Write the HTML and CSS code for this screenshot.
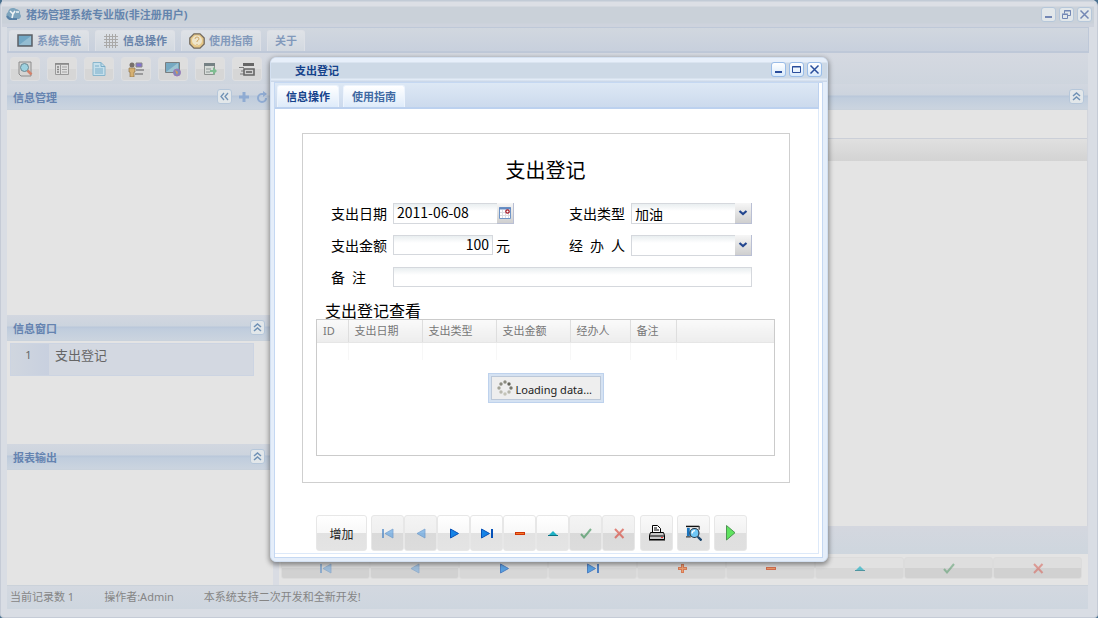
FILE: index.html
```html
<!DOCTYPE html>
<html lang="zh-CN">
<head>
<meta charset="utf-8">
<title>猪场管理系统专业版(非注册用户)</title>
<link rel="stylesheet" href="styles.css">
</head>
<body>
<svg class="sprite" aria-hidden="true">
  <symbol id="min" viewBox="0 0 13 13"><path d="M3 8h7v2H3z" fill="currentColor"/></symbol>
  <symbol id="max" viewBox="0 0 13 13"><path d="M2.500 3.500h8v6h-8zM2 4h9" fill="none" stroke="currentColor"/></symbol>
  <symbol id="restore" viewBox="0 0 13 13"><path d="M4.500 5.500v-3h6v5h-3M4 3h7M2.500 6.500h5v4h-5zM2 6h6" fill="none" stroke="currentColor"/></symbol>
  <symbol id="close" viewBox="0 0 13 13"><path d="M2.500 2.500l8 8M10.500 2.500l-8 8" fill="none" stroke="currentColor" stroke-width="1.500"/></symbol>
  <symbol id="up2" viewBox="0 0 13 13"><path d="M3 6l3.500-3L10 6M3 10l3.500-3 3.500 3" fill="none" stroke="currentColor" stroke-width="1.500"/></symbol>
  <symbol id="left2" viewBox="0 0 13 13"><path d="M6 3L3 6.500 6 10M10 3L7 6.500l3 3.500" fill="none" stroke="currentColor" stroke-width="1.300"/></symbol>
  <symbol id="first" viewBox="0 0 16 16"><path d="M3 4v9" stroke="#3f7fc4" stroke-width="2"/><path d="M13 4v9L5 8.500z" fill="#5fa4e4" stroke="#3f7fc4" stroke-width=".8"/></symbol>
  <symbol id="prev" viewBox="0 0 16 16"><path d="M12 4v9L4 8.500z" fill="#5fa4e4" stroke="#3f7fc4" stroke-width=".8"/></symbol>
  <symbol id="next" viewBox="0 0 16 16"><path d="M4.500 4v9l8-4.500z" fill="#1583e6" stroke="#0652b8"/></symbol>
  <symbol id="last" viewBox="0 0 16 16"><path d="M2.500 4v9l8-4.500z" fill="#1583e6" stroke="#0652b8"/><path d="M13 4v9" stroke="#0652b8" stroke-width="2"/></symbol>
  <symbol id="plus" viewBox="0 0 16 16"><path d="M7 4h3v3h3v3h-3v3H7v-3H4V7h3z" fill="#d84a10"/><path d="M5 8.500h7M8.500 5v7" stroke="#f58340"/></symbol>
  <symbol id="minus" viewBox="0 0 16 16"><path d="M3 7h10v3H3z" fill="#cf3507"/><path d="M4 8.500h8" stroke="#f47a2c"/></symbol>
  <symbol id="edit" viewBox="0 0 16 16"><path d="M3 11l5-5 5 5z" fill="#1fb2c6"/><path d="M3 10.500h10" stroke="#087284"/></symbol>
  <symbol id="check" viewBox="0 0 16 16"><path d="M3 9l3 3.500L13 4" fill="none" stroke="#3d9157" stroke-width="2"/></symbol>
  <symbol id="cancel" viewBox="0 0 16 16"><path d="M4 4l8.500 9M12.500 4L4 13" fill="none" stroke="#d9483b" stroke-width="2"/></symbol>
</svg>

<div class="app">
  <header class="app-title">
    <svg class="logo" viewBox="0 0 16 14"><path d="M3 12A4 4 0 0 1 2 5a5 5 0 0 1 8-3 4 4 0 0 1 4 5 3 3 0 0 1-1 5z" fill="#7da4bd"/><path d="M1 9a5 5 0 0 0 5 3h5" fill="none" stroke="#5680a6" stroke-width="2"/><path d="M4 4l3 3 2-3M7 7l-1 4M10 5h3" fill="none" stroke="#eef3f5" stroke-width="1.600"/></svg>
    <h1>猪场管理系统专业版(非注册用户)</h1>
    <div class="tools">
      <button class="tool" aria-label="最小化"><svg><use href="#min"/></svg></button>
      <button class="tool" aria-label="还原"><svg><use href="#restore"/></svg></button>
      <button class="tool" aria-label="关闭"><svg><use href="#close"/></svg></button>
    </div>
  </header>
  <nav class="app-tabs">
    <button class="tab"><svg viewBox="0 0 16 16"><path d="M1 2h14v11H1z" fill="#72a7c4" stroke="#5c6066" stroke-width="1.500"/><path d="M2 12L14 3v9z" fill="#94bdd2"/></svg>系统导航</button>
    <button class="tab active"><svg viewBox="0 0 16 16"><path d="M3.500 1v14M6.500 1v14M9.500 1v14M12.500 1v14M1 3.500h14M1 6.500h14M1 9.500h14M1 12.500h14" stroke="#aaa9a8" fill="none"/></svg>信息操作</button>
    <button class="tab"><svg viewBox="0 0 16 16"><path d="M5 .8h6L15.200 5v6L11 15.200H5L.8 11V5z" fill="#e6c787" stroke="#746b5f" stroke-width="1.300"/><circle cx="8" cy="7.500" r="5" fill="#eee5cb"/><path d="M6 6q0-2 2-2t2 2q0 1-2 2v1M8 11v1" fill="none" stroke="#cfa86b"/></svg>使用指南</button>
    <button class="tab">关于</button>
  </nav>
  <div class="app-toolbar">
    <button aria-label="查找"><svg viewBox="0 0 16 16"><path d="M2 1h12v14H4l-2-2z" fill="#d6d5d3" stroke="#8c8c8c"/><circle cx="7.500" cy="6.500" r="4" fill="#9dd1df" stroke="#6b8893"/><path d="M10.500 9.500l4 4" stroke="#d1826b" stroke-width="2.500"/></svg></button>
    <button aria-label="列表"><svg viewBox="0 0 16 16"><path d="M1.500 2.500h13v11h-13z" fill="#dedede" stroke="#999"/><path d="M1 3h14M3 6h2M3 8.500h2M3 11h2" stroke="#858585" stroke-width="1.500"/><path d="M6.500 3v10" stroke="#999"/><path d="M8 6h5M8 8.500h5M8 11h5" stroke="#a3a3a3"/></svg></button>
    <button aria-label="文档"><svg viewBox="0 0 16 16"><path d="M2 1.500h8l4 4v9H2z" fill="#c5dfeb" stroke="#88b6cd"/><path d="M10 1.500v4h4M4 5h4M4 8h8M4 10h8M4 12h8" fill="none" stroke="#79adc9"/></svg></button>
    <button aria-label="人员"><svg viewBox="0 0 16 16"><circle cx="4" cy="4" r="2.500" fill="#77706b"/><path d="M1 7h6v4H6v5H2v-5H1z" fill="#d6b071" stroke="#91754e" stroke-width=".7"/><path d="M8 2h6v4H8z" fill="#8173ce" stroke="#888"/><path d="M8 8h8v2H8zM7 12h8v2H7z" fill="#9a9a9b"/></svg></button>
    <button aria-label="网络"><svg viewBox="0 0 16 16"><path d="M.5 1.500h14v10H.5z" fill="#76a9c2" stroke="#7a7e80"/><path d="M1 11l12-9v9z" fill="#9fc4d2"/><circle cx="12" cy="11.500" r="3.500" fill="#7d8bbd" stroke="#9a78b8"/><path d="M10 9l3 2-1 3z" fill="#d89c55"/></svg></button>
    <button aria-label="数据"><svg viewBox="0 0 16 16"><path d="M2.500 2.500h10v11h-10z" fill="#d7dcd9" stroke="#8e9290"/><path d="M2 2h11v3H2z" fill="#758184"/><path d="M4 8h5M4 11h4" stroke="#8c9695"/><path d="M8 9h3V6l4 4-4 4v-3H8z" fill="#7fbd91"/></svg></button>
    <button aria-label="打印"><svg viewBox="0 0 16 16"><path d="M4 2h11v3H4z" fill="#666"/><path d="M0 6.500h5M2 10h3M1 13h4" stroke="#7b7b7b"/><path d="M5 8h10v6H5z" fill="#cfcfcf" stroke="#666" stroke-width="1.600"/><path d="M7 11h6" stroke="#777" stroke-width="2"/></svg></button>
  </div>
  <main class="workspace">
    <aside class="side">
      <section class="pane grow-205">
        <header class="pane-head"><h2>信息管理</h2>
          <button class="tool" aria-label="折叠"><svg><use href="#left2"/></svg></button>
          <button class="plain" aria-label="新增"><svg viewBox="0 0 12 12"><path d="M6 1v10M1 6h10" stroke="#8fabd2" stroke-width="3"/></svg></button>
          <button class="plain" aria-label="刷新"><svg viewBox="0 0 12 12"><path d="M8 3H6a4 4 0 1 0 4 4" fill="none" stroke="#8fabd2" stroke-width="2"/><path d="M7 0l4 3-4 3z" fill="#8fabd2"/></svg></button>
        </header>
      </section>
      <section class="pane grow-103">
        <header class="pane-head"><h2>信息窗口</h2><button class="tool" aria-label="折叠"><svg><use href="#up2"/></svg></button></header>
        <div class="row"><span class="row-no">1</span><span>支出登记</span></div>
      </section>
      <section class="pane grow-115">
        <header class="pane-head"><h2>报表输出</h2><button class="tool" aria-label="折叠"><svg><use href="#up2"/></svg></button></header>
      </section>
    </aside>
    <section class="main-pane">
      <header class="pane-head"><button class="tool" aria-label="折叠"><svg><use href="#up2"/></svg></button></header>
      <div class="main-grid"><div class="main-grid-head"></div></div>
      <div class="main-bar"></div>
      <div class="main-nav">
        <button class="off" aria-label="首条"><svg><use href="#first"/></svg></button>
        <button class="off" aria-label="上一条"><svg><use href="#prev"/></svg></button>
        <button aria-label="下一条"><svg><use href="#next"/></svg></button>
        <button aria-label="末条"><svg><use href="#last"/></svg></button>
        <button aria-label="增加"><svg><use href="#plus"/></svg></button>
        <button aria-label="删除"><svg><use href="#minus"/></svg></button>
        <button aria-label="编辑"><svg><use href="#edit"/></svg></button>
        <button class="off" aria-label="保存"><svg><use href="#check"/></svg></button>
        <button class="off" aria-label="取消"><svg><use href="#cancel"/></svg></button>
      </div>
    </section>
  </main>
  <footer class="status"><span>当前记录数 1</span><span>操作者:Admin</span><span>本系统支持二次开发和全新开发!</span></footer>
</div>

<div class="dialog" role="dialog" aria-labelledby="dialog-title">
  <header class="dialog-title">
    <h2 id="dialog-title">支出登记</h2>
    <div class="tools">
      <button class="tool" aria-label="最小化"><svg><use href="#min"/></svg></button>
      <button class="tool" aria-label="最大化"><svg><use href="#max"/></svg></button>
      <button class="tool" aria-label="关闭"><svg><use href="#close"/></svg></button>
    </div>
  </header>
  <div class="dialog-inner">
    <nav class="dialog-tabs"><button class="tab active">信息操作</button><button class="tab">使用指南</button></nav>
    <div class="dialog-body">
      <form class="sheet">
        <h3>支出登记</h3>
        <div class="fields">
          <label for="date">支出日期</label>
          <div class="control date">
            <input id="date" value="2011-06-08">
            <button type="button" class="trigger" aria-label="选择日期"><svg viewBox="0 0 14 14"><path d="M1.500 1.500h11v11h-11z" fill="#fff" stroke="#6f95c8"/><path d="M1 2.500h12" stroke="#6389c1" stroke-width="2"/><path d="M2 6.500h10M2 9.500h10M4.500 4v8M7.500 4v8M10.500 4v8" stroke="#dcdce2"/><circle cx="9.500" cy="5.500" r="1.700" fill="#fff" stroke="#a51220" stroke-width="1.200"/></svg></button>
          </div>
          <label for="kind">支出类型</label>
          <div class="control combo">
            <select id="kind"><option>加油</option></select>
            <svg class="trigger" viewBox="0 0 16 20"><path d="M4.500 8L8 11l3.500-3" fill="none" stroke="#23468f" stroke-width="2.200"/></svg>
          </div>
          <label for="sum">支出金额</label>
          <div class="amount"><input id="sum" value="100"><span>元</span></div>
          <label class="spread" for="who"><span>经</span><span>办</span><span>人</span></label>
          <div class="control combo">
            <select id="who"><option></option></select>
            <svg class="trigger" viewBox="0 0 16 20"><path d="M4.500 8L8 11l3.500-3" fill="none" stroke="#23468f" stroke-width="2.200"/></svg>
          </div>
          <label class="note" for="note"><span>备</span><span>注</span></label>
          <input class="wide" id="note">
        </div>
        <h4>支出登记查看</h4>
        <div class="grid">
          <table>
            <colgroup><col class="c-id"><col class="c-wide"><col class="c-wide"><col class="c-wide"><col class="c-who"><col class="c-note"><col></colgroup>
            <thead><tr><th>ID</th><th>支出日期</th><th>支出类型</th><th>支出金额</th><th>经办人</th><th>备注</th><th></th></tr></thead>
            <tbody><tr><td></td><td></td><td></td><td></td><td></td><td></td><td></td></tr></tbody>
          </table>
          <div class="loading" role="status"><div>
            <svg viewBox="0 0 16 16"><g fill="#8b8b80"><circle cx="8" cy="2" r="1.700"/><circle cx="12" cy="4" r="1.700" fill="#66665c"/><circle cx="14" cy="8" r="1.700" fill="#77776c"/><circle cx="12" cy="12" r="1.700" fill="#b5b5a9"/><circle cx="8" cy="14" r="1.700" fill="#c4c4b8"/><circle cx="4" cy="12" r="1.700" fill="#b9b9ae"/><circle cx="2" cy="8" r="1.700" fill="#a3a397"/><circle cx="4" cy="4" r="1.700"/></g></svg>
            <span>Loading data...</span></div></div>
        </div>
      </form>
      <div class="actions">
        <button class="add">增加</button>
        <div class="group">
          <button class="off" aria-label="首条"><svg><use href="#first"/></svg></button>
          <button class="off" aria-label="上一条"><svg><use href="#prev"/></svg></button>
          <button aria-label="下一条"><svg><use href="#next"/></svg></button>
          <button aria-label="末条"><svg><use href="#last"/></svg></button>
          <button aria-label="删除"><svg><use href="#minus"/></svg></button>
          <button aria-label="编辑"><svg><use href="#edit"/></svg></button>
          <button class="off" aria-label="保存"><svg><use href="#check"/></svg></button>
          <button class="off" aria-label="取消"><svg><use href="#cancel"/></svg></button>
        </div>
        <button class="soft" aria-label="打印"><svg viewBox="0 0 16 16"><path d="M3.500 7V.500h5l3 3V7" fill="#fff" stroke="#000"/><path d="M5 3h3M5 5h5" stroke="#000"/><path d="M1.500 7.500h13l1 3v4H.500v-4z" fill="#c9c9c9" stroke="#000"/><path d="M0 11h16M0 15h16" stroke="#000"/><path d="M12 12.500h2" stroke="#e33"/></svg></button>
        <button class="soft" aria-label="预览"><svg viewBox="0 0 17 17"><path d="M0 1.500h14" stroke="#111" stroke-width="1.500"/><path d="M1 3h3v9H1z" fill="#1b75bd"/><path d="M0 12.500h5M14 1v4" stroke="#444" stroke-width="1.300"/><circle cx="9" cy="8.500" r="4.800" fill="#6fc7f6" stroke="#234" stroke-width="1.200"/><path d="M6.500 9q0-3 3-3" fill="none" stroke="#fff" stroke-width="1.500"/><path d="M12.500 12.500l4 4" stroke="#16436b" stroke-width="2.500"/></svg></button>
        <button class="soft" aria-label="执行"><svg viewBox="0 0 16 16"><path d="M3.500.500v14.500L12 7.700z" fill="#5fe35f" stroke="#4d9652"/></svg></button>
      </div>
    </div>
  </div>
</div>
</body>
</html>
```
FILE: styles.css
```css
* { box-sizing: border-box; }
body, h1, h2, h3, h4 { margin: 0; }
body { position: relative; font: 11px/16px "Noto Sans", "Noto Sans CJK SC", sans-serif; overflow: hidden; background: #49708f; }
h1, h2 { font-size: 11px; line-height: 16px; font-weight: bold; }
button, input, select { font: inherit; color: inherit; margin: 0; padding: 0; border: 0; border-radius: 0; }
button { cursor: pointer; }
svg { display: block; width: 16px; height: 16px; }
.sprite { position: absolute; width: 0; height: 0; }

.tools { display: flex; gap: 3px; margin-left: auto; }
.tool { width: 15px; height: 15px; border: 1px solid #b6c7da; border-radius: 3px; background: #e2e7ea; color: #7387b4; display: grid; place-items: center; flex: none; }
.tool svg { width: 13px; height: 13px; }
.tab { display: flex; align-items: center; justify-content: center; gap: 4px; font-weight: bold; }

.app { display: flex; flex-direction: column; height: 100vh; padding: 0 8px 8px 6px; background: #d9dde4; border: solid #c5cbd6; border-width: 0 1px 1px; border-radius: 6px 6px 4px 4px; }
.app-title { display: flex; align-items: center; gap: 4px; height: 27px; flex: none; margin: 0 -5px 0 -5px; padding: 1px 2px 0 4px; background: linear-gradient(#c2cbd6 0 1px, #dcdfe5 2px 6px, #cad1d9 7px 23px, #ced3dd 24px); color: #6484ad; }
.app-title .logo { height: 14px; }
.app-title h1 { padding-top: 2px; }
.app-tabs { display: flex; gap: 6px; height: 26px; flex: none; padding: 2px 2px 0; background: linear-gradient(#d1d7df, #c8d0dd); border: solid #bec8d8; border-width: 1px 1px 2px 0; }
.app-tabs .tab { height: 21px; padding: 0 7px; background: linear-gradient(#dfe2e7, #d2d8e0); border: 1px solid #dde0e6; border-bottom: 0; border-radius: 3px 3px 0 0; color: #8299bb; }
.app-tabs .tab.active { color: #6783aa; }
.app-toolbar { display: flex; gap: 7px; height: 31px; flex: none; padding: 4px 3px; background: linear-gradient(#d5d9e1, #ced5de); margin-right: 1px; }
.app-toolbar button { display: grid; place-items: center; width: 30px; height: 24px; background: linear-gradient(#dedede 50%, #d6d6d6 50%); border: 1px solid #dedfe1; border-radius: 3px; }
.workspace { display: flex; flex: 1; min-height: 0; background: #d9dce3; gap: 6px; }
.side { display: flex; flex-direction: column; width: 266px; flex: none; background: #e4e4e4; }
.pane { display: flex; flex-direction: column; flex-basis: 26px; min-height: 0; }
.grow-205 { flex-grow: 205; }
.grow-103 { flex-grow: 103; }
.grow-115 { flex-grow: 115; }
.pane-head { display: flex; align-items: center; justify-content: flex-end; gap: 6px; height: 26px; flex: none; padding: 0 4px 0 6px; color: #6583b0; background: linear-gradient(#d2d7e0, #ccd4de 11px, #b9c7da 12px, #c0cddd 14px, #cbd4df); border-bottom: 1px solid #c9d2dc; }
.pane-head h2 { margin-right: auto; padding-top: 3px; }
.pane-head .tool { color: #6f91b5; }
.side .pane:first-child .pane-head { padding-right: 5px; }
.side .pane:not(:first-child) .pane-head { padding-right: 8px; }
.plain { background: none; width: 12px; height: 12px; }
.plain svg { width: 12px; height: 12px; }
.row { display: flex; height: 33px; margin: 2px 19px 0 3px; line-height: 22px; font-size: 13px; background: #d3d8e1; border: 1px solid #ccd4e2; color: #666; gap: 6px; }
.row-no { width: 38px; padding-right: 3px; text-align: center; font-size: 11px; background: linear-gradient(90deg, #d0d6df, #c8d0df); }
.main-pane { display: flex; flex-direction: column; flex: 1; min-width: 0; margin-right: 1px; background: #e4e4e4; }
.main-grid { flex: 1; padding-top: 28px; border-right: 1px solid #d2d5dc; }
.main-grid-head { height: 23px; background: linear-gradient(#e0e0e0, #d3d3d3); border-top: 1px solid #cbcfd8; }
.main-bar { height: 28px; background: linear-gradient(#d4d7df, #ced6de); }
.main-nav { display: flex; padding: 3px 6px 6px 2px; }
.main-nav button { flex: 1; height: 22px; display: grid; place-items: center; background: linear-gradient(#e1e1e1 50%, #d7d7d7 50%); border: 1px solid #dcdcdc; border-radius: 3px; }
.main-nav .off { background: linear-gradient(#dedede 50%, #d1d1d1 50%); }
.main-nav svg { opacity: .65; }
.main-nav .off svg { opacity: .45; }
.status { display: flex; gap: 30px; height: 24px; flex: none; align-items: center; margin-right: 1px; padding: 0 3px 2px; color: #858585; background: linear-gradient(#d3d8e0, #ced6df); border-top: 1px solid #cbd2da; }

.dialog { position: absolute; left: 270px; top: 57px; width: 558px; padding: 0 4px 3px 3px; background: #e5eefa; border: 1px solid #d3e0f1; border-radius: 6px; box-shadow: 0 2px 5px 1px rgba(0,0,0,.4); }
.dialog-title { display: flex; align-items: center; height: 24px; margin: 0 -4px 0 -3px; padding: 0 5px 1px 24px; background: linear-gradient(#e7effa 0 4px, #cdd9e6 5px 20px, #e2ebf6 21px 22px, #cbd8ea 23px); color: #15428b; border-radius: 5px 5px 0 0; }
.dialog-title h2 { padding-top: 3px; }
.dialog .tool { border-color: #99bce8; background: linear-gradient(#fff, #d9eafb); color: #294d9b; }
.dialog-inner { border: 1px solid #c5d8f2; padding: 0 3px 3px 0; background: #fff; }
.dialog-tabs { display: flex; gap: 4px; height: 26px; padding: 2px 2px 0; background: linear-gradient(#dde8f5, #ccdaed); border: solid #bcd1ef; border-width: 0 1px 2px 0; }
.dialog-tabs .tab { height: 22px; padding: 0 8px; background: linear-gradient(#fff, #deebfa); border: 1px solid #edf4fd; border-bottom: 0; border-radius: 3px 3px 0 0; color: #416aa3; }
.dialog-tabs .tab.active { color: #15428b; }
.dialog-body { padding: 24px 28px 2px 27px; border: solid #dde9f9; border-width: 0 1px 1px 0; }

.sheet { display: block; height: 350px; padding: 23px 14px 0 13px; border: 1px solid #cfcfcf; color: #000; }
.sheet h3 { font-size: 20px; line-height: 28px; font-weight: 400; text-align: center; }
.fields { display: grid; grid-template-columns: 62px 1fr 62px 121px; row-gap: 11px; padding: 18px 23px 0 15px; font-family: "Noto Sans CJK SC", sans-serif; font-size: 14px; line-height: 21px; }
.fields label { white-space: nowrap; }
.fields .spread { display: flex; justify-content: space-between; padding-right: 6px; }
.fields .note { display: flex; gap: 7px; }
.fields input, .fields select { width: 100%; height: 21px; border: 1px solid #d5d8dd; background: linear-gradient(#e9eef0, #fff 7px); padding: 0 3px 2px; appearance: none; outline: 0; }
.control { display: grid; height: 21px; width: 121px; }
.control > * { grid-area: 1 / 1; }
.control .trigger { justify-self: end; width: 17px; height: 21px; background: linear-gradient(#f6f6f6, #cfcfcf); border: solid #b9bfd4; border-width: 0 1px 1px 0; pointer-events: none; }
.date .trigger { pointer-events: auto; display: grid; place-items: center; }
.date .trigger svg { width: 14px; height: 14px; }
.amount { display: flex; gap: 3px; height: 21px; }
.amount input { width: 100px; height: 20px; text-align: right; }
.fields .wide { grid-column: 2 / -1; height: 20px; width: auto; }
.sheet h4 { font-size: 16px; line-height: 20px; font-weight: 400; margin: 13px 0 0 9px; }
.grid { position: relative; height: 137px; margin-top: -2px; border: 1px solid #cbcbcb; }
.grid table { width: 100%; table-layout: fixed; border-collapse: collapse; color: #777; }
.grid th { height: 22px; padding: 0 6px; text-align: left; font-weight: 400; background: linear-gradient(#fafafa, #ededed); border-right: 1px solid #dedede; border-bottom: 1px solid #e6e6e6; }
.grid td { height: 18px; padding: 0; border-right: 1px solid #f7f7f7; }
.grid th:last-child, .grid td:last-child { border-right: 0; }
.c-id { width: 31px; }
.c-wide { width: 74px; }
.c-who { width: 60px; }
.c-note { width: 46px; }
.loading { position: absolute; left: 50%; top: 53px; margin-left: -58px; padding: 2px; background: #d5e2f2; border: 1px solid #bed2ed; color: #222; }
.loading div { display: flex; align-items: center; gap: 3px; height: 24px; padding: 0 8px 0 5px; background: #eee; border: 1px solid #bcc8d8; white-space: nowrap; }
.loading span { padding-top: 3px; }

.actions { display: flex; gap: 4px; padding: 32px 0 0 14px; }
.actions .group { display: flex; margin-right: 1px; }
.actions button { display: grid; place-items: center; width: 33px; height: 36px; background: linear-gradient(#fff, #f8f8f8 50%, #e2e2e2 50%, #e4e4e4); border: 1px solid #e7e7e7; border-radius: 3px; }
.actions .add { width: 51px; padding-top: 3px; font-size: 12px; color: #222; }
.actions .soft { background: linear-gradient(#f9f9f9, #f2f2f2 50%, #dfdfdf 50%, #e0e0e0); }
.actions .off { background: linear-gradient(#f4f4f4, #efefef 50%, #dadada 50%, #dcdcdc); }
.actions .off svg { opacity: .65; }
```
